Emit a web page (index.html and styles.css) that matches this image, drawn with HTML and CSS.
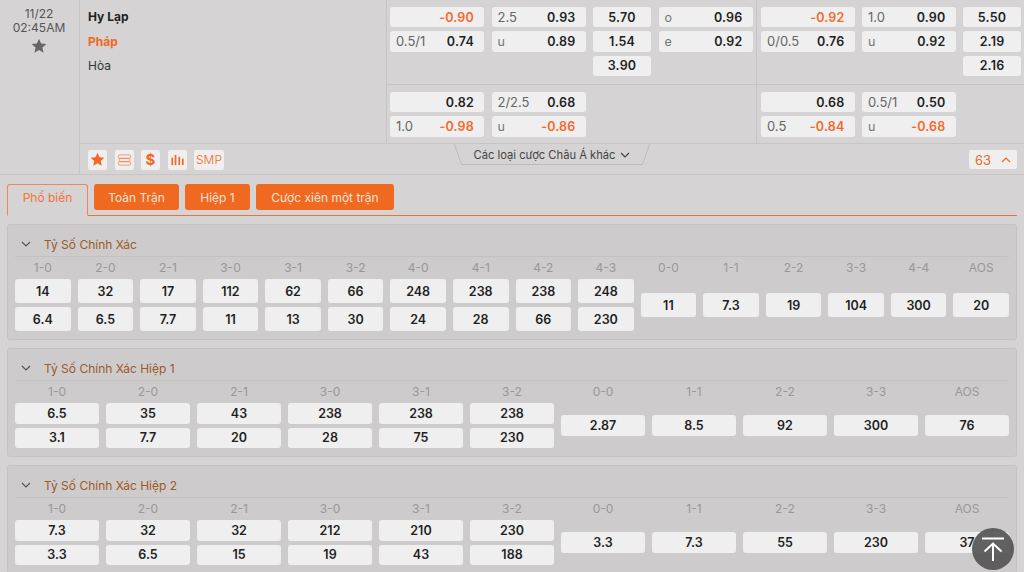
FILE: index.html
```html
<!DOCTYPE html>
<html lang="vi">
<head>
<meta charset="utf-8">
<title>Hy Lạp - Pháp</title>
<link rel="stylesheet" href="styles.css">
</head>
<body>
<div class="match">
  <div class="time">
    <div>11/22</div>
    <div>02:45AM</div>
    <svg class="fav" viewBox="0 0 24 24" width="16" height="16"><path d="M12 1l3.2 7.3 7.800.8-5.900 5.200 1.800 7.700L12 18l-6.900 4 1.800-7.700L1 9.100l7.800-.8z"/></svg>
  </div>
  <div class="main">
    <div class="top">
      <div class="teams">
        <div class="team home">Hy Lạp</div>
        <div class="team away">Pháp</div>
        <div class="team draw">Hòa</div>
      </div>
      <div class="markets">
        <div class="mrow first">
          <div class="group g1">
            <div class="stack">
              <div class="odd"><span></span><b class="neg">-0.90</b></div>
              <div class="odd"><span>0.5/1</span><b>0.74</b></div>
            </div>
            <div class="stack">
              <div class="odd"><span>2.5</span><b>0.93</b></div>
              <div class="odd"><span class="lt">u</span><b>0.89</b></div>
            </div>
            <div class="stack narrow">
              <div class="odd mid"><b>5.70</b></div>
              <div class="odd mid"><b>1.54</b></div>
              <div class="odd mid"><b>3.90</b></div>
            </div>
            <div class="stack">
              <div class="odd"><span class="lt">o</span><b>0.96</b></div>
              <div class="odd"><span class="lt">e</span><b>0.92</b></div>
            </div>
          </div>
          <div class="group g2">
            <div class="stack">
              <div class="odd"><span></span><b class="neg">-0.92</b></div>
              <div class="odd"><span>0/0.5</span><b>0.76</b></div>
            </div>
            <div class="stack">
              <div class="odd"><span>1.0</span><b>0.90</b></div>
              <div class="odd"><span class="lt">u</span><b>0.92</b></div>
            </div>
            <div class="stack narrow">
              <div class="odd mid"><b>5.50</b></div>
              <div class="odd mid"><b>2.19</b></div>
              <div class="odd mid"><b>2.16</b></div>
            </div>
          </div>
        </div>
        <div class="mrow second">
          <div class="group g1">
            <div class="stack">
              <div class="odd"><span></span><b>0.82</b></div>
              <div class="odd"><span>1.0</span><b class="neg">-0.98</b></div>
            </div>
            <div class="stack">
              <div class="odd"><span>2/2.5</span><b>0.68</b></div>
              <div class="odd"><span class="lt">u</span><b class="neg">-0.86</b></div>
            </div>
          </div>
          <div class="group g2">
            <div class="stack">
              <div class="odd"><span></span><b>0.68</b></div>
              <div class="odd"><span>0.5</span><b class="neg">-0.84</b></div>
            </div>
            <div class="stack">
              <div class="odd"><span>0.5/1</span><b>0.50</b></div>
              <div class="odd"><span class="lt">u</span><b class="neg">-0.68</b></div>
            </div>
          </div>
        </div>
      </div>
    </div>
    <div class="actions">
      <div class="tools">
        <span class="tool"><svg viewBox="0 0 24 24" width="15" height="15"><path fill="#f06822" d="M12 1l3.200 7.300 7.800.8-5.900 5.200 1.800 7.700L12 18l-6.900 4 1.800-7.700L1 9.100l7.800-.8z"/></svg></span>
        <span class="tool"><svg viewBox="0 0 18 14" width="15" height="12" fill="none" stroke="#f4894f" stroke-width="1"><rect x="1.500" y="0.800" width="15" height="4.200" rx="2"/><rect x="2.500" y="5" width="13" height="4" rx="1"/><rect x="1.500" y="9" width="15" height="4.200" rx="2"/></svg></span>
        <span class="tool dollar">$</span>
        <span class="tool"><svg viewBox="0 0 14 12" width="13" height="12" fill="#f06822"><rect x="0.500" y="3.500" width="1.800" height="8"/><rect x="4" y="0.500" width="1.800" height="11"/><rect x="8" y="2.500" width="1.800" height="9"/><rect x="11.800" y="4.500" width="1.800" height="7"/></svg></span>
        <span class="tool smp">SMP</span>
      </div>
      <div class="more">
        <svg class="more-shape" viewBox="0 0 196 21" width="196" height="21" fill="none" stroke="#bdbbbc"><path d="M0.500 0l7 20.500h181l7-20.500"/></svg>
        <span class="more-text">Các loại cược Châu Á khác</span>
        <svg viewBox="0 0 10 6" width="10" height="6" fill="none" stroke="#444" stroke-width="1.200"><path d="M1 1l4 4 4-4"/></svg>
      </div>
      <div class="count-wrap">
        <span class="count">63<svg viewBox="0 0 10 6" width="10" height="6" fill="none" stroke="#f06822" stroke-width="1.200"><path d="M1 5l4-4 4 4"/></svg></span>
      </div>
    </div>
  </div>
</div>

<div class="tabs">
  <span class="tab active">Phổ biến</span>
  <span class="tab full">Toàn Trận</span>
  <span class="tab half">Hiệp 1</span>
  <span class="tab parlay">Cược xiên một trận</span>
</div>

<section class="panel tall">
  <header class="panel-head"><svg viewBox="0 0 10 6" width="10" height="6" fill="none" stroke="#555" stroke-width="1.200"><path d="M1 1l4 4 4-4"/></svg><h2>Tỷ Số Chính Xác</h2></header>
  <div class="scores c16">
    <div class="col"><em>1-0</em><div class="cells"><b>14</b><b>6.4</b></div></div>
    <div class="col"><em>2-0</em><div class="cells"><b>32</b><b>6.5</b></div></div>
    <div class="col"><em>2-1</em><div class="cells"><b>17</b><b>7.7</b></div></div>
    <div class="col"><em>3-0</em><div class="cells"><b>112</b><b>11</b></div></div>
    <div class="col"><em>3-1</em><div class="cells"><b>62</b><b>13</b></div></div>
    <div class="col"><em>3-2</em><div class="cells"><b>66</b><b>30</b></div></div>
    <div class="col"><em>4-0</em><div class="cells"><b>248</b><b>24</b></div></div>
    <div class="col"><em>4-1</em><div class="cells"><b>238</b><b>28</b></div></div>
    <div class="col"><em>4-2</em><div class="cells"><b>238</b><b>66</b></div></div>
    <div class="col"><em>4-3</em><div class="cells"><b>248</b><b>230</b></div></div>
    <div class="col"><em>0-0</em><div class="cells"><b>11</b></div></div>
    <div class="col"><em>1-1</em><div class="cells"><b>7.3</b></div></div>
    <div class="col"><em>2-2</em><div class="cells"><b>19</b></div></div>
    <div class="col"><em>3-3</em><div class="cells"><b>104</b></div></div>
    <div class="col"><em>4-4</em><div class="cells"><b>300</b></div></div>
    <div class="col"><em>AOS</em><div class="cells"><b>20</b></div></div>
  </div>
</section>

<section class="panel">
  <header class="panel-head"><svg viewBox="0 0 10 6" width="10" height="6" fill="none" stroke="#555" stroke-width="1.200"><path d="M1 1l4 4 4-4"/></svg><h2>Tỷ Số Chính Xác Hiệp 1</h2></header>
  <div class="scores c11">
    <div class="col"><em>1-0</em><div class="cells"><b>6.5</b><b>3.1</b></div></div>
    <div class="col"><em>2-0</em><div class="cells"><b>35</b><b>7.7</b></div></div>
    <div class="col"><em>2-1</em><div class="cells"><b>43</b><b>20</b></div></div>
    <div class="col"><em>3-0</em><div class="cells"><b>238</b><b>28</b></div></div>
    <div class="col"><em>3-1</em><div class="cells"><b>238</b><b>75</b></div></div>
    <div class="col"><em>3-2</em><div class="cells"><b>238</b><b>230</b></div></div>
    <div class="col"><em>0-0</em><div class="cells"><b>2.87</b></div></div>
    <div class="col"><em>1-1</em><div class="cells"><b>8.5</b></div></div>
    <div class="col"><em>2-2</em><div class="cells"><b>92</b></div></div>
    <div class="col"><em>3-3</em><div class="cells"><b>300</b></div></div>
    <div class="col"><em>AOS</em><div class="cells"><b>76</b></div></div>
  </div>
</section>

<section class="panel">
  <header class="panel-head"><svg viewBox="0 0 10 6" width="10" height="6" fill="none" stroke="#555" stroke-width="1.200"><path d="M1 1l4 4 4-4"/></svg><h2>Tỷ Số Chính Xác Hiệp 2</h2></header>
  <div class="scores c11">
    <div class="col"><em>1-0</em><div class="cells"><b>7.3</b><b>3.3</b></div></div>
    <div class="col"><em>2-0</em><div class="cells"><b>32</b><b>6.5</b></div></div>
    <div class="col"><em>2-1</em><div class="cells"><b>32</b><b>15</b></div></div>
    <div class="col"><em>3-0</em><div class="cells"><b>212</b><b>19</b></div></div>
    <div class="col"><em>3-1</em><div class="cells"><b>210</b><b>43</b></div></div>
    <div class="col"><em>3-2</em><div class="cells"><b>230</b><b>188</b></div></div>
    <div class="col"><em>0-0</em><div class="cells"><b>3.3</b></div></div>
    <div class="col"><em>1-1</em><div class="cells"><b>7.3</b></div></div>
    <div class="col"><em>2-2</em><div class="cells"><b>55</b></div></div>
    <div class="col"><em>3-3</em><div class="cells"><b>230</b></div></div>
    <div class="col"><em>AOS</em><div class="cells"><b>37</b></div></div>
  </div>
</section>

<button class="totop" type="button" aria-label="Lên đầu trang"><svg viewBox="0 0 24 24" width="24" height="24" fill="none" stroke="#fff" stroke-width="2"><path d="M1 1.500h22M12 24V6.500M3.500 14.500L12 6.500l8.500 8"/></svg></button>
</body>
</html>
```
FILE: styles.css
```css
* { box-sizing: border-box; }
html, body { height: 100%; }
body {
  margin: 0;
  height: 572px;
  overflow: hidden;
  background: #d5d3d4;
  color: #1f1f1f;
  font-family: Inter, "Liberation Sans", sans-serif;
  font-size: 12px;
}

/* Match header */
.match {
  display: flex;
  height: 175px;
  border-bottom: 1px solid #c6c4c5;
}
.time {
  width: 80px;
  flex: none;
  padding: 7px 1px 0 0;
  border-right: 1px solid #c6c4c5;
  text-align: center;
  color: #555;
  font-size: 12px;
  line-height: 14px;
}
.fav { display: block; margin: 3px auto 0; fill: #666; }
.main { flex: 1; display: flex; flex-direction: column; min-width: 0; }
.top { display: flex; height: 144px; border-bottom: 1px solid #c6c4c5; }
.teams {
  width: 307px;
  flex: none;
  padding: 5px 0 0 8px;
  border-right: 1px solid #c6c4c5;
}
.team { height: 24.500px; line-height: 24px; font-size: 12px; }
.home { font-weight: 700; }
.away { font-weight: 700; color: #f06822; }
.draw { color: #333; }

.markets { flex: 1; display: flex; flex-direction: column; }
.mrow { display: flex; }
.first { height: 85px; flex: none; border-bottom: 1px solid #c6c4c5; }
.second { height: 58px; flex: none; }
.group { display: flex; padding-top: 7px; gap: 7.500px; }
.g1 { width: 370px; padding-left: 3px; border-right: 1px solid #c6c4c5; }
.g2 { padding-left: 4px; }
.stack { display: flex; flex-direction: column; gap: 4px; width: 94px; }
.g2 .stack { width: 93.500px; }
.stack.narrow, .g2 .stack.narrow { width: 58px; }
.odd {
  height: 20.300px;
  display: flex;
  align-items: center;
  justify-content: space-between;
  padding: 0 10px 0 6px;
  background: #efefef;
  border-radius: 3px;
  font-size: 13px;
  color: #666;
}
.odd b { font-size: 12.500px; font-weight: 600; color: #1f1f1f; letter-spacing: .2px; }
.odd b.neg { color: #f5682a; }
.odd .lt { color: #777; font-size: 12.500px; }
.odd.mid { justify-content: center; padding: 0; }

/* Action bar */
.actions {
  flex: 1;
  display: grid;
  grid-template-columns: 1fr auto 1fr;
}
.tools { display: flex; gap: 7.500px; padding: 6px 0 0 8px; }
.tool {
  width: 19px;
  height: 19.500px;
  display: flex;
  align-items: center;
  justify-content: center;
  background: #efefef;
  border-radius: 2px;
  color: #f06822;
}
.dollar { font-weight: 700; font-size: 15px; }
.smp { width: 30px; font-size: 12px; font-weight: 300; }
.more {
  position: relative;
  width: 196px;
  height: 21px;
  display: flex;
  align-items: center;
  justify-content: center;
  gap: 5px;
  font-size: 11.200px;
  color: #444;
}
.more-shape { position: absolute; left: 0; top: 0; }
.count-wrap { display: flex; justify-content: flex-end; padding: 6px 7px 0 0; }
.count {
  width: 48px;
  height: 19px;
  display: flex;
  align-items: center;
  justify-content: center;
  gap: 10px;
  background: #efefef;
  border-radius: 2px;
  color: #f06822;
  font-size: 13px;
}

/* Tabs */
.tabs {
  display: flex;
  gap: 6px;
  height: 32px;
  margin: 9px 7px 8px;
  border-bottom: 1px solid #e8723c;
}
.tab {
  height: 26px;
  display: flex;
  align-items: center;
  justify-content: center;
  background: #ef6921;
  border-radius: 3px;
  color: #f1e2d8;
  font-size: 12px;
}
.full { width: 85px; }
.half { width: 65px; }
.parlay { width: 138px; }
.tab.active {
  height: 32px;
  width: 81px;
  padding-bottom: 5px;
  background: #d5d3d4;
  color: #f0763a;
  border: 1px solid #f0865a;
  border-bottom-color: #d5d3d4;
  border-radius: 3px 3px 0 0;
}

/* Panels */
.panel {
  margin: 0 7px 8px;
  padding: 0 7px;
  background: #cdcbcc;
  border: 1px solid #c4c2c3;
  border-radius: 3px;
}
.panel-head {
  height: 32px;
  display: flex;
  align-items: center;
  gap: 13px;
  padding: 7px 0 0 6px;
  border-bottom: 1px solid #c2c0c1;
}
.panel-head h2 {
  margin: 0;
  font-size: 12px;
  font-weight: 400;
  color: #9c5a26;
}
.scores { display: grid; column-gap: 7px; padding-bottom: 8px; }
.c16 { grid-template-columns: repeat(16, 1fr); }
.c11 { grid-template-columns: repeat(11, 1fr); }
.col { display: flex; flex-direction: column; }
.col em {
  height: 22px;
  line-height: 22px;
  text-align: center;
  font-style: normal;
  color: #9a9899;
  font-size: 12px;
}
.cells {
  flex: 1;
  display: flex;
  flex-direction: column;
  justify-content: center;
  gap: 4px;
}
.cells b {
  height: 20.500px;
  display: flex;
  align-items: center;
  justify-content: center;
  background: #efefef;
  border-radius: 3px;
  font-size: 12.500px;
  font-weight: 600;
  color: #1f1f1f;
}
.tall .cells b { height: 24px; }

/* Back to top */
.totop {
  position: fixed;
  right: 10px;
  bottom: 2px;
  width: 42px;
  height: 42px;
  padding: 0;
  display: flex;
  align-items: center;
  justify-content: center;
  background: rgba(85, 85, 85, .92);
  border: 0;
  border-radius: 50%;
}
```
